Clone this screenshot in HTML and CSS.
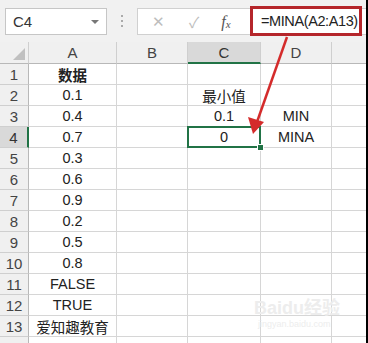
FILE: index.html
```html
<!DOCTYPE html>
<html lang="zh">
<head>
<meta charset="utf-8">
<link rel="stylesheet" href="styles.css">
</head>
<body>
<div class="app">
  <div class="fbar">
    <div class="namebox"><span>C4</span><span class="drop"></span></div>
    <div class="dots"><i></i><i></i><i></i></div>
    <div class="fbox">
      <span class="ico x">✕</span>
      <span class="ico ok">✓</span>
      <span class="ico fx">f<sub>x</sub></span>
      <div class="formula">=MINA(A2:A13)</div>
    </div>
  </div>
  <div class="sheet">
    <div class="c hd corner"><span class="tri"></span></div>
    <div class="c hd">A</div><div class="c hd">B</div><div class="c hd csel">C</div><div class="c hd">D</div><div class="c hd"></div>

    <div class="c rh">1</div><div class="c b">数据</div><div class="c"></div><div class="c"></div><div class="c"></div><div class="c"></div>
    <div class="c rh">2</div><div class="c">0.1</div><div class="c"></div><div class="c">最小值</div><div class="c"></div><div class="c"></div>
    <div class="c rh">3</div><div class="c">0.4</div><div class="c"></div><div class="c">0.1</div><div class="c">MIN</div><div class="c"></div>
    <div class="c rh rsel">4</div><div class="c">0.7</div><div class="c"></div><div class="c sel">0<span class="handle"></span></div><div class="c">MINA</div><div class="c"></div>
    <div class="c rh">5</div><div class="c">0.3</div><div class="c"></div><div class="c"></div><div class="c"></div><div class="c"></div>
    <div class="c rh">6</div><div class="c">0.6</div><div class="c"></div><div class="c"></div><div class="c"></div><div class="c"></div>
    <div class="c rh">7</div><div class="c">0.9</div><div class="c"></div><div class="c"></div><div class="c"></div><div class="c"></div>
    <div class="c rh">8</div><div class="c">0.2</div><div class="c"></div><div class="c"></div><div class="c"></div><div class="c"></div>
    <div class="c rh">9</div><div class="c">0.5</div><div class="c"></div><div class="c"></div><div class="c"></div><div class="c"></div>
    <div class="c rh">10</div><div class="c">0.8</div><div class="c"></div><div class="c"></div><div class="c"></div><div class="c"></div>
    <div class="c rh">11</div><div class="c">FALSE</div><div class="c"></div><div class="c"></div><div class="c"></div><div class="c"></div>
    <div class="c rh">12</div><div class="c">TRUE</div><div class="c"></div><div class="c"></div><div class="c"></div><div class="c"></div>
    <div class="c rh">13</div><div class="c">爱知趣教育</div><div class="c"></div><div class="c"></div><div class="c"></div><div class="c"></div>
    <div class="c rh"></div><div class="c"></div><div class="c"></div><div class="c"></div><div class="c"></div><div class="c"></div>
  </div>
  <div class="wm"><div class="wm1">Baidu经验</div><div class="wm2">jingyan.baidu.com</div></div>
  <svg class="arrow" width="368" height="343" viewBox="0 0 368 343">
    <line x1="287" y1="37" x2="257" y2="122" stroke="#d42b2b" stroke-width="2.5"/>
    <polygon points="253,134 248,117 264,122" fill="#d42b2b"/>
  </svg>
</div>
</body>
</html>
```
FILE: styles.css
```css
html, body { margin: 0; padding: 0; background: #000; }
body { width: 368px; height: 343px; overflow: hidden; }
.app {
  position: relative;
  width: 366px; height: 343px; overflow: hidden;
  background: #fff;
  font-family: "Liberation Sans", "Noto Sans CJK SC", sans-serif;
}
.fbar {
  height: 42px; box-sizing: border-box;
  background: #f1f1f1;
  display: flex; align-items: flex-start;
  padding-top: 8px;
}
.namebox {
  margin-left: 5px; width: 102px; height: 27px; box-sizing: border-box;
  background: #fff; border: 1px solid #c6c6c6;
  display: flex; align-items: center; justify-content: space-between;
  padding: 0 7px 0 7px; font-size: 15px; color: #333;
}
.drop { width: 0; height: 0; border-left: 4px solid transparent; border-right: 4px solid transparent; border-top: 4px solid #777; }
.dots { width: 30px; display: flex; flex-direction: column; align-items: center; gap: 3px; padding-top: 7px; }
.dots i { width: 2px; height: 2px; background: #aaa; display: block; }
.fbox {
  flex: 1; height: 27px; box-sizing: border-box;
  background: #fff; border: 1px solid #d0d0d0; border-right: none;
  display: flex; align-items: center; position: relative;
}
.ico { color: #bdbdbd; font-size: 15px; }
.x { margin-left: 14px; }
.ok { margin-left: 24px; }
.fx { margin-left: 22px; color: #555; font-family: "Liberation Serif", serif; font-style: italic; font-size: 16px; }
.fx sub { font-size: 11px; vertical-align: -1px; }
.formula {
  margin-left: auto; margin-right: 4px; margin-top: -2px;
  border: 3px solid #b5262b; height: 30px; box-sizing: border-box;
  width: 112px; padding-left: 8px;
  display: flex; align-items: center;
  font-size: 14.5px; color: #222; letter-spacing: -0.4px; white-space: nowrap;
}
.sheet {
  display: grid;
  grid-template-columns: 29px 88px 71px 73px 71px 36px;
  grid-template-rows: 22px repeat(14, 21px);
}
.c {
  box-sizing: border-box; border-right: 1px solid #d6d6d6; border-bottom: 1px solid #d6d6d6;
  display: flex; align-items: center; justify-content: center;
  font-size: 14.5px; color: #222; position: relative;
}
.b { font-weight: bold; }
.hd { background: #f0f0f0; color: #444; font-size: 15px; border-right-color: #cfcfcf; border-bottom: 1px solid #b8b8b8; }
.rh { background: #f0f0f0; color: #444; font-size: 15px; border-right: 1px solid #b8b8b8; border-bottom-color: #cfcfcf; }
.csel { background: #d9d9d9; border-bottom: 2px solid #217346; color: #333; }
.rsel { background: #d9d9d9; border-right: 2px solid #217346; color: #333; }
.corner { position: relative; }
.tri { position: absolute; right: 3px; bottom: 3px; width: 0; height: 0; border-left: 12px solid transparent; border-bottom: 12px solid #c0c0c0; }
.sel::after { content: ""; position: absolute; left: -1px; top: -1px; right: -1px; bottom: -1px; border: 2px solid #217346; }
.handle { position: absolute; right: -4px; bottom: -4px; width: 5px; height: 5px; background: #217346; border: 1px solid #fff; z-index: 2; }
.arrow { position: absolute; left: 0; top: 0; pointer-events: none; }
.wm { position: absolute; left: 254px; top: 293px; color: #ededed; font-family: "Liberation Sans", "Noto Sans CJK SC", sans-serif; pointer-events: none; }
.wm1 { font-size: 18px; font-weight: bold; }
.wm2 { font-size: 9px; margin-left: 4px; }
```
